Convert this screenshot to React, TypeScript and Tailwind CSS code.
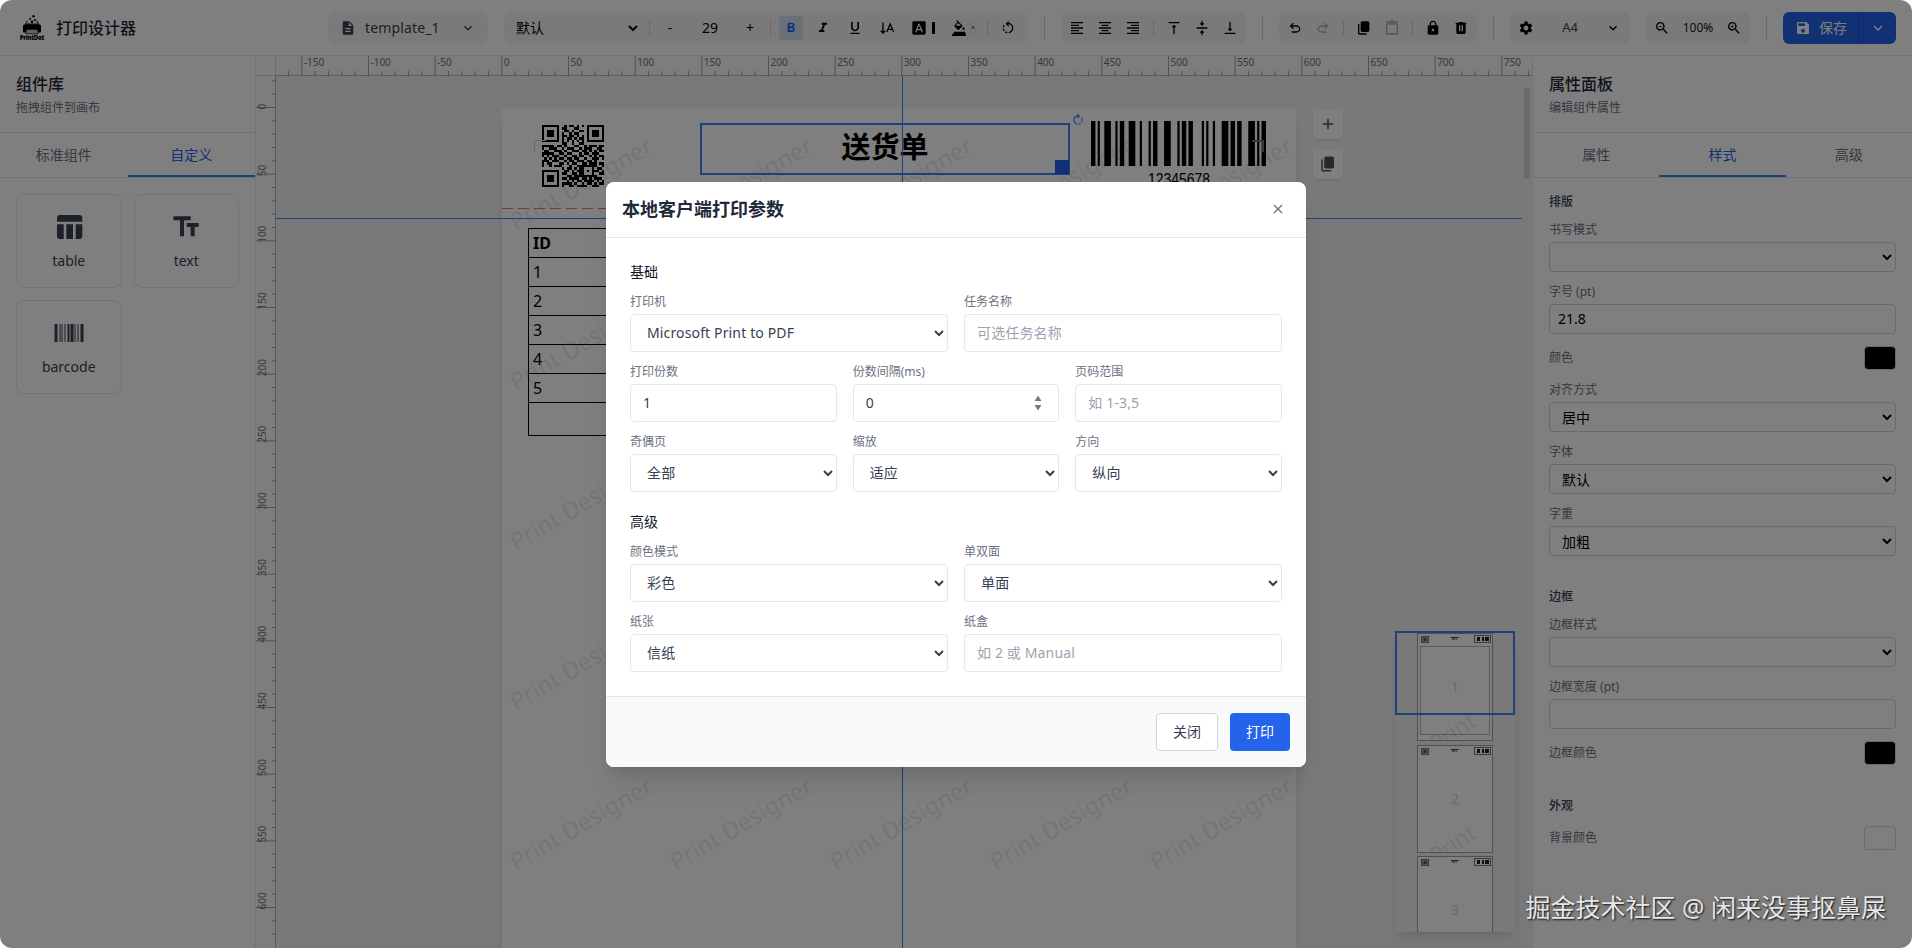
import type { ReactNode } from "react"
import {
    MdAdd,
    MdContentPaste,
    MdDescription,
    MdExpandMore,
    MdFontDownload,
    MdFormatAlignCenter,
    MdFormatAlignLeft,
    MdFormatAlignRight,
    MdFormatBold,
    MdFormatColorFill,
    MdFormatItalic,
    MdFormatUnderlined,
    MdLock,
    MdRotateLeft,
    MdRotateRight,
    MdSave,
    MdSettings,
    MdTableChart,
    MdTextFields,
    MdVerticalAlignBottom,
    MdVerticalAlignCenter,
    MdVerticalAlignTop,
    MdZoomIn,
    MdZoomOut,
} from "react-icons/md"

// 1pt on the rulers is 4/3 px
const PT = 4 / 3

const QR_ROWS = [
    "1111111001011010101111111",
    "1000001011000110001000001",
    "1011101001101001101011101",
    "1011101010010110001011101",
    "1011101011011010101011101",
    "1000001010110101101000001",
    "1111111010101010101111111",
    "0000000011001001100000000",
    "1111101101000110010111011",
    "1001110010111001011100110",
    "0110011101001110110101011",
    "1111100110110001011011100",
    "1010111001001101100101011",
    "0101010110110110010011101",
    "1110111001011011101101000",
    "1011000110101100110111011",
    "1001011100010011111111001",
    "0000000010110101100010110",
    "1111111001101011101011101",
    "1000001011001101100010011",
    "1011101000110111111111000",
    "1011101011011110110101110",
    "1011101000101011011110101",
    "1000001011110100101101011",
    "1111111010011011110011100",
]

// Code 128-C widths: start, 12, 34, 56, 78, checksum, stop
const BARCODE = "2112321122321311233311212411121331212331112"

// [x, width] of each bar in the barcode card icon
const CARD_BARS = [
    [0, 3],
    [5, 1],
    [7, 1],
    [10, 1],
    [13, 2],
    [16, 3],
    [20, 1],
    [23, 1],
    [26, 3],
]

function UndoIcon({ flip = false }: { flip?: boolean }) {
    return (
        <svg viewBox="0 0 24 24" className={flip ? "w-4 h-4 -scale-x-100" : "w-4 h-4"} fill="currentColor">
            <path d="M7 19v-2h7.1q1.575 0 2.738-1T18 13.5T16.838 11T14.1 10H7.8l2.6 2.6L9 14L4 9l5-5l1.4 1.4L7.8 8h6.3q2.425 0 4.163 1.575T20 13.5t-1.737 3.925T14.1 19z" />
        </svg>
    )
}

function CopyIcon({ className = "w-4 h-4" }: { className?: string }) {
    return (
        <svg viewBox="0 0 24 24" className={className} fill="currentColor">
            <path d="M9 18q-.825 0-1.412-.587T7 16V4q0-.825.588-1.412T9 2h9q.825 0 1.413.588T20 4v12q0 .825-.587 1.413T18 18zm-4 4q-.825 0-1.412-.587T3 20V6h2v14h11v2z" />
        </svg>
    )
}

function TrashIcon() {
    return (
        <svg viewBox="0 0 24 24" className="w-4 h-4" fill="currentColor">
            <path d="M7 21q-.825 0-1.412-.587T5 19V6H4V4h5V3h6v1h5v2h-1v13q0 .825-.587 1.413T17 21zm2-4h2V8H9zm4 0h2V8h-2z" />
        </svg>
    )
}

function VerticalTextIcon() {
    return (
        <svg viewBox="0 0 16 16" className="w-4 h-4" fill="none" stroke="currentColor" strokeWidth="1.300">
            <path d="M4 2.500v10.500M1.800 10.800 4 13l2.200-2.200" />
            <path d="M7.800 12 11.200 4l3.400 8M9 9.400h4.400" />
        </svg>
    )
}

function Logo() {
    return (
        <svg viewBox="0 0 32 32" className="w-8 h-8 shrink-0">
            <circle cx="17.5" cy="4.2" r="1.2" />
            <circle cx="14.2" cy="6.8" r="1" />
            <circle cx="18.8" cy="8" r="1" />
            <circle cx="16" cy="9.8" r="1.3" />
            <path d="M11.5 8.5 9.5 12h13l-2-3.5" fill="none" stroke="#000" strokeWidth="0.9" />
            <path d="M9 12.3h14q2 0 2 2v5q0 1.2-1.2 1.2H22v-3H10v3H8.2q-1.2 0-1.2-1.2v-5q0-2 2-2z" />
            <path d="M10.5 17.500h11l.8 4.300H9.700z" fill="#c4c4c4" stroke="#000" strokeWidth="0.7" />
            <text x="16" y="27.600" fontSize="6" fontWeight="800" textAnchor="middle" textLength="24.500" fontFamily="Open Sans, sans-serif">
                PrintDot
            </text>
        </svg>
    )
}

function IconButton({ children, active, disabled }: { children: ReactNode; active?: boolean; disabled?: boolean }) {
    const tone = active ? "bg-[#d5e0f0] text-[#2563eb]" : disabled ? "text-black opacity-30" : "text-black"
    return <button className={`w-6 h-6 shrink-0 rounded flex items-center justify-center ${tone}`}>{children}</button>
}

function Group({ children, className = "px-1 gap-1" }: { children: ReactNode; className?: string }) {
    return <div className={`h-8 bg-[#f5f5f6] rounded-lg flex items-center shrink-0 ${className}`}>{children}</div>
}

function InnerDivider({ className = "" }: { className?: string }) {
    return <div className={`w-px h-4 bg-gray-300 shrink-0 ${className}`} />
}

function OuterDivider() {
    return <div className="w-px h-6 bg-gray-300 shrink-0" />
}

function Toolbar() {
    return (
        <header className="h-14 shrink-0 bg-white border-b border-gray-200 px-4 flex items-center justify-between">
            <div className="flex items-center gap-2">
                <Logo />
                <h1 className="text-base font-medium text-gray-800">打印设计器</h1>
            </div>

            <div className="flex items-center gap-4 text-sm">
                <Group className="w-40 px-3">
                    <MdDescription className="w-4 h-4 text-gray-700 shrink-0" />
                    <span className="ml-[9px] text-gray-700 flex-1 tracking-[0.01em]">template_1</span>
                    <MdExpandMore className="w-4 h-4 text-gray-700" />
                </Group>

                <Group className="px-2 gap-2">
                    <select className="w-[129px] h-6 text-sm text-black">
                        <option>默认</option>
                    </select>
                    <InnerDivider />
                    <button className="w-6 text-center">-</button>
                    <span className="w-10 text-center">29</span>
                    <button className="w-6 text-center">+</button>
                    <InnerDivider />
                    <IconButton active>
                        <MdFormatBold className="w-4 h-4" />
                    </IconButton>
                    <IconButton>
                        <MdFormatItalic className="w-4 h-4" />
                    </IconButton>
                    <IconButton>
                        <MdFormatUnderlined className="w-4 h-4" />
                    </IconButton>
                    <IconButton>
                        <VerticalTextIcon />
                    </IconButton>
                    <div className="w-8 flex items-center">
                        <IconButton>
                            <MdFontDownload className="w-4 h-4" />
                        </IconButton>
                        <span className="w-[3px] h-3 bg-black ml-px" />
                    </div>
                    <div className="w-8 flex items-center">
                        <IconButton>
                            <span className="flex flex-col items-center">
                                <MdFormatColorFill className="w-[15px] h-[14px]" />
                                <span className="w-3.5 h-0.5 bg-black" />
                            </span>
                        </IconButton>
                        <span className="w-1 h-3 border border-gray-300 bg-white flex items-center">
                            <span className="w-full h-[3px] bg-red-400" />
                        </span>
                    </div>
                    <InnerDivider />
                    <IconButton>
                        <MdRotateLeft className="w-4 h-4" />
                    </IconButton>
                </Group>

                <OuterDivider />

                <Group>
                    <IconButton>
                        <MdFormatAlignLeft className="w-4 h-4" />
                    </IconButton>
                    <IconButton>
                        <MdFormatAlignCenter className="w-4 h-4" />
                    </IconButton>
                    <IconButton>
                        <MdFormatAlignRight className="w-4 h-4" />
                    </IconButton>
                    <InnerDivider className="mx-1" />
                    <IconButton>
                        <MdVerticalAlignTop className="w-4 h-4" />
                    </IconButton>
                    <IconButton>
                        <MdVerticalAlignCenter className="w-4 h-4" />
                    </IconButton>
                    <IconButton>
                        <MdVerticalAlignBottom className="w-4 h-4" />
                    </IconButton>
                </Group>

                <OuterDivider />

                <Group>
                    <IconButton>
                        <UndoIcon />
                    </IconButton>
                    <IconButton disabled>
                        <UndoIcon flip />
                    </IconButton>
                    <InnerDivider className="mx-1" />
                    <IconButton>
                        <CopyIcon />
                    </IconButton>
                    <IconButton disabled>
                        <MdContentPaste className="w-4 h-4" />
                    </IconButton>
                    <InnerDivider className="mx-1" />
                    <IconButton>
                        <MdLock className="w-4 h-4" />
                    </IconButton>
                    <IconButton>
                        <TrashIcon />
                    </IconButton>
                </Group>

                <OuterDivider />

                <Group className="w-[120px] px-1">
                    <IconButton>
                        <MdSettings className="w-4 h-4" />
                    </IconButton>
                    <span className="w-16 text-center text-[13px] text-gray-700">A4</span>
                    <MdExpandMore className="w-4 h-4 ml-[3px] text-black" />
                </Group>

                <Group>
                    <IconButton>
                        <MdZoomOut className="w-4 h-4" />
                    </IconButton>
                    <span className="w-10 text-center text-xs text-gray-900">100%</span>
                    <IconButton>
                        <MdZoomIn className="w-4 h-4" />
                    </IconButton>
                </Group>

                <OuterDivider />

                <div className="h-8 w-[113px] rounded-md bg-[#2563eb] text-white flex overflow-hidden">
                    <button className="w-[76px] flex items-center gap-2 pl-3 border-r border-[#1d4ed8]">
                        <MdSave className="w-4 h-4" />
                        <span className="text-sm">保存</span>
                    </button>
                    <button className="flex-1 flex items-center justify-center">
                        <MdExpandMore className="w-[18px] h-[18px]" />
                    </button>
                </div>
            </div>
        </header>
    )
}

function PanelHeader({ title, hint }: { title: string; hint: string }) {
    return (
        <div className="p-4 border-b border-gray-200">
            <h2 className="text-base font-medium text-gray-800">{title}</h2>
            <p className="text-xs text-gray-500 mt-1">{hint}</p>
        </div>
    )
}

function Tabs({ items, active }: { items: string[]; active: string }) {
    return (
        <div className="flex border-b border-gray-200">
            {items.map((item) => (
                <button
                    key={item}
                    className={
                        item === active
                            ? "flex-1 pt-3 pb-2.5 text-sm text-[#2563eb] border-b-2 border-[#3b82f6]"
                            : "flex-1 pt-3 pb-2.5 text-sm text-gray-500 border-b-2 border-transparent"
                    }
                >
                    {item}
                </button>
            ))}
        </div>
    )
}

function ComponentCard({ icon, label }: { icon: ReactNode; label: string }) {
    return (
        <div className="h-[94px] border border-gray-200 rounded-lg flex flex-col items-center justify-center gap-2 text-gray-700">
            <div className="h-8 flex items-center">{icon}</div>
            <span className="text-sm">{label}</span>
        </div>
    )
}

function LibraryPanel() {
    return (
        <aside className="w-64 shrink-0 bg-white border-r border-gray-200">
            <PanelHeader title="组件库" hint="拖拽组件到画布" />
            <Tabs items={["标准组件", "自定义"]} active="自定义" />
            <div className="p-4 grid grid-cols-2 gap-3">
                <ComponentCard icon={<MdTableChart className="w-8 h-8" />} label="table" />
                <ComponentCard icon={<MdTextFields className="w-8 h-8" />} label="text" />
                <ComponentCard
                    icon={
                        <svg viewBox="0 0 29 18" className="w-[30px] h-[18px]" fill="currentColor">
                            {CARD_BARS.map(([x, w]) => (
                                <rect key={x} x={x} width={w} height="18" />
                            ))}
                        </svg>
                    }
                    label="barcode"
                />
            </div>
        </aside>
    )
}

function HorizontalRuler() {
    const ticks = Array.from({ length: 95 }, (_, i) => (i - 17) * 10)
    return (
        <svg className="h-5 w-full block bg-gray-50" fontSize="10" fill="#6b7280">
            <line x1="0" x2="1260" y1="19.5" y2="19.5" stroke="#b4b8bf" />
            {ticks.map((v) => {
                const x = 225.8 + v * PT
                return v % 50 === 0 ? (
                    <g key={v}>
                        <line x1={x} x2={x} y1="0" y2="20" stroke="#9ca3af" />
                        <text x={x + 2} y="10">
                            {v}
                        </text>
                    </g>
                ) : (
                    <line key={v} x1={x} x2={x} y1="15" y2="20" stroke="#9ca3af" />
                )
            })}
        </svg>
    )
}

function VerticalRuler() {
    const ticks = Array.from({ length: 65 }, (_, i) => (i - 2) * 10)
    return (
        <svg className="w-5 h-full block bg-gray-50" fontSize="10" fill="#6b7280">
            <line x1="19.5" x2="19.5" y1="0" y2="900" stroke="#b4b8bf" />
            {ticks.map((v) => {
                const y = 31.5 + v * PT
                return v % 50 === 0 ? (
                    <g key={v}>
                        <line x1="0" x2="20" y1={y} y2={y} stroke="#9ca3af" />
                        <text transform={`translate(10 ${y + 2}) rotate(-90)`}>{v}</text>
                    </g>
                ) : (
                    <line key={v} x1="16" x2="20" y1={y} y2={y} stroke="#9ca3af" />
                )
            })}
        </svg>
    )
}

function QrCode() {
    return (
        <svg viewBox="0 0 25 25" className="w-full h-full" shapeRendering="crispEdges">
            {QR_ROWS.flatMap((row, y) =>
                row.split("").map((c, x) => (c === "1" ? <rect key={`${x}-${y}`} x={x} y={y} width="1" height="1" /> : null))
            )}
        </svg>
    )
}

function Barcode() {
    let x = 0
    const bars: ReactNode[] = []
    BARCODE.split("").forEach((c, i) => {
        const w = Number(c)
        if (i % 2 === 0) bars.push(<rect key={i} x={x} y="0" width={w} height="45" />)
        x += w
    })
    return (
        <div className="flex flex-col items-center">
            <svg viewBox="0 0 79 45" preserveAspectRatio="none" className="w-[175px] h-[45px]">
                {bars}
            </svg>
            <svg viewBox="0 0 62 20" className="w-[62px] h-5 mt-1">
                <text x="0" y="15" fontSize="17" textLength="62" lengthAdjust="spacingAndGlyphs" fontFamily="Liberation Sans, sans-serif">
                    12345678
                </text>
            </svg>
        </div>
    )
}

function Watermark() {
    const cells = [0, 1, 2, 3, 4].flatMap((col) => [0, 1, 2, 3, 4].map((row) => ({ col, row })))
    return (
        <svg className="absolute inset-0 w-full h-full" fontSize="23.5" fill="rgba(0,0,0,0.09)">
            {cells.map(({ col, row }) => (
                <text key={`${col}-${row}`} transform={`translate(${14 + col * 160} ${123 + row * 160}) rotate(-30)`} textLength="160">
                    Print Designer
                </text>
            ))}
        </svg>
    )
}

function DataTable() {
    return (
        <table className="w-[740px] border-collapse text-base leading-5 text-black">
            <tbody>
                {["ID", "1", "2", "3", "4", "5", ""].map((cell, i) => (
                    <tr key={i} className={i === 6 ? "h-[33px]" : "h-[29px]"}>
                        <td className={i === 0 ? "border border-black px-1 py-0 font-bold" : "border border-black px-1 py-0"}>{cell}</td>
                    </tr>
                ))}
            </tbody>
        </table>
    )
}

function Paper() {
    return (
        <div className="absolute left-[226px] top-8 w-[794px] h-[1123px] bg-white shadow-lg">
            <div className="absolute left-[40px] top-[17px] w-[62px] h-[62px]">
                <QrCode />
            </div>
            <div className="absolute left-[589px] top-[13px]">
                <Barcode />
            </div>
            <svg className="absolute left-0 top-[100px] w-full h-px">
                <line x1="0" x2="794" y1="0.5" y2="0.5" stroke="#f87171" strokeWidth="1" strokeDasharray="11 5" />
            </svg>
            <div className="absolute left-[26px] top-[120px]">
                <DataTable />
            </div>
            {/* margin corner marks */}
            <div className="absolute left-[32px] top-[32px] w-3 h-3 border-l border-t border-gray-300" />
            <div className="absolute left-[750px] top-[32px] w-3 h-3 border-r-2 border-t-2 border-gray-500" />
            <Watermark />
            <div className="absolute left-[198px] top-[15px] w-[370px] h-[52px] border-2 border-[#3b82f6] flex justify-center">
                <span className="text-[29px] leading-[44px] font-bold text-black">送货单</span>
                <span className="absolute -right-px -bottom-px w-3.5 h-3.5 bg-[#2563eb]" />
                <MdRotateRight className="absolute -right-[17px] -top-[12px] w-3.5 h-3.5 text-[#3b82f6]" />
            </div>
            <div className="absolute left-[811px] top-px flex flex-col gap-2.5 text-gray-600">
                <button className="w-[30px] h-[30px] rounded bg-white shadow flex items-center justify-center">
                    <MdAdd className="w-[18px] h-[18px]" />
                </button>
                <button className="w-[30px] h-[30px] rounded bg-white shadow flex items-center justify-center">
                    <CopyIcon className="w-[18px] h-[18px]" />
                </button>
            </div>
        </div>
    )
}

function MiniPage({ number, table }: { number: number; table?: boolean }) {
    return (
        <div className="relative w-[76px] h-[108px] shrink-0 bg-white border border-gray-400 overflow-hidden">
            <svg viewBox="0 0 74 106" className="w-full h-full">
                <rect x="3.5" y="2.500" width="7" height="6" fill="#aaa" stroke="#777" />
                <rect x="5.500" y="4" width="3" height="3" fill="#555" />
                <path d="M33 3.500h8M34 5h5" fill="none" stroke="#333" strokeDasharray="3 .5" />
                <rect x="56.500" y="1.500" width="16" height="7" fill="none" stroke="#777" />
                <path d="M59 3h3v4h-3zM64 3h2v4h-2zM67 3h4v4h-4z" fill="#222" />
                {table && <rect x="2.500" y="12.500" width="69" height="88" fill="none" stroke="#b4b8bf" />}
                <text transform="translate(18 118) rotate(-33)" fontSize="22" fill="rgba(0,0,0,0.1)">
                    Print
                </text>
            </svg>
            <span className="absolute inset-0 flex items-center justify-center text-sm text-gray-300">{number}</span>
        </div>
    )
}

function MiniMap() {
    return (
        <div className="absolute left-[1119px] top-[555px] w-[120px] h-[301px] bg-[#f3f3f4] shadow-lg">
            <div className="h-full pt-[2px] flex flex-col items-center gap-[3.5px] overflow-hidden">
                <MiniPage number={1} table />
                <MiniPage number={2} />
                <MiniPage number={3} />
            </div>
            <div className="absolute left-0 top-0 w-[120px] h-[84px] border-2 border-[#3b82f6]" />
        </div>
    )
}

function Workspace() {
    return (
        <main className="flex-1 min-w-0 flex flex-col bg-[#f3f3f4]">
            <div className="flex h-5 shrink-0">
                <div className="w-5 shrink-0 bg-gray-50 border-r border-b border-gray-300" />
                <HorizontalRuler />
            </div>
            <div className="flex flex-1 min-h-0">
                <div className="w-5 shrink-0">
                    <VerticalRuler />
                </div>
                <div className="relative flex-1 overflow-hidden">
                    <Paper />
                    <div className="absolute top-0 bottom-0 left-[626px] w-px bg-[#3b82f6]" />
                    <div className="absolute left-0 right-[10px] top-[142px] h-px bg-[#3b82f6]" />
                    <MiniMap />
                    <div className="absolute right-[2px] top-3 w-1.5 h-[91px] rounded-full bg-gray-300" />
                </div>
            </div>
        </main>
    )
}

function PropSelect({ label, value = "" }: { label: string; value?: string }) {
    return (
        <label className="block mt-3">
            <span className="block text-xs text-gray-500">{label}</span>
            <select className="block mt-1 w-full h-[30px] px-2 text-sm text-black border border-gray-300 rounded">
                <option>{value}</option>
            </select>
        </label>
    )
}

function PropInput({ label, value = "" }: { label: string; value?: string }) {
    return (
        <label className="block mt-3">
            <span className="block text-xs text-gray-500">{label}</span>
            <input readOnly value={value} className="block mt-1 w-full h-[30px] px-2 pb-px text-sm text-black border border-gray-300 rounded" />
        </label>
    )
}

function ColorRow({ label, empty }: { label: string; empty?: boolean }) {
    return (
        <div className="mt-3 h-6 flex items-center justify-between">
            <span className="text-xs text-gray-500">{label}</span>
            <span className={empty ? "w-8 h-6 rounded border border-gray-300" : "w-8 h-6 rounded border border-gray-300 bg-black"} />
        </div>
    )
}

function PropertyPanel() {
    return (
        <aside className="w-[380px] shrink-0 bg-white border-l border-gray-200">
            <PanelHeader title="属性面板" hint="编辑组件属性" />
            <Tabs items={["属性", "样式", "高级"]} active="样式" />
            <div className="p-4 flex flex-col gap-[33px]">
                <section>
                    <h3 className="text-xs font-medium text-gray-700">排版</h3>
                    <PropSelect label="书写模式" />
                    <PropInput label="字号 (pt)" value="21.8" />
                    <ColorRow label="颜色" />
                    <PropSelect label="对齐方式" value="居中" />
                    <PropSelect label="字体" value="默认" />
                    <PropSelect label="字重" value="加粗" />
                </section>
                <section>
                    <h3 className="text-xs font-medium text-gray-700">边框</h3>
                    <PropSelect label="边框样式" />
                    <PropInput label="边框宽度 (pt)" />
                    <ColorRow label="边框颜色" />
                </section>
                <section>
                    <h3 className="text-xs font-medium text-gray-700">外观</h3>
                    <ColorRow label="背景颜色" empty />
                </section>
            </div>
        </aside>
    )
}

function Field({ label, children }: { label: string; children: ReactNode }) {
    return (
        <label className="block">
            <span className="block mb-1 text-xs text-gray-500">{label}</span>
            {children}
        </label>
    )
}

function SelectField({ label, value }: { label: string; value: string }) {
    return (
        <Field label={label}>
            <select className="block w-full h-[38px] px-3 text-sm tracking-[0.01em] text-gray-700 border border-gray-200 rounded">
                <option>{value}</option>
            </select>
        </Field>
    )
}

function InputField({ label, value, placeholder, spinner }: { label: string; value?: string; placeholder?: string; spinner?: boolean }) {
    return (
        <Field label={label}>
            <span className="relative block">
                <input
                    readOnly
                    value={value ?? ""}
                    placeholder={placeholder}
                    className="block w-full h-[38px] px-3 text-sm tracking-[0.01em] text-gray-700 border border-gray-200 rounded placeholder:text-[#9ca3af]"
                />
                {spinner && (
                    <svg viewBox="0 0 8 16" className="absolute right-[17px] top-[11px] w-2 h-4" fill="#7a7a7a">
                        <path d="M4 0.500 7.500 6h-7zM4 15.500 7.500 10h-7z" />
                    </svg>
                )}
            </span>
        </Field>
    )
}

function PrintDialog() {
    return (
        <div className="w-[700px] bg-white rounded-lg shadow-xl overflow-hidden">
            <div className="h-14 px-4 border-b border-gray-200 flex items-center justify-between">
                <h2 className="text-lg font-semibold text-[#1f2937]">本地客户端打印参数</h2>
                <button className="w-6 h-6 flex items-center justify-center text-gray-500">
                    <svg viewBox="0 0 10 10" className="w-2.5 h-2.5" fill="none" stroke="currentColor" strokeWidth="1.3">
                        <path d="M1 1l8 8M9 1L1 9" />
                    </svg>
                </button>
            </div>

            <div className="p-6 flex flex-col gap-5">
                <section className="flex flex-col gap-3">
                    <h3 className="text-sm text-[#111827]">基础</h3>
                    <div className="grid grid-cols-2 gap-4">
                        <SelectField label="打印机" value="Microsoft Print to PDF" />
                        <InputField label="任务名称" placeholder="可选任务名称" />
                    </div>
                    <div className="grid grid-cols-3 gap-x-4 gap-y-3">
                        <InputField label="打印份数" value="1" />
                        <InputField label="份数间隔(ms)" value="0" spinner />
                        <InputField label="页码范围" placeholder="如 1-3,5" />
                        <SelectField label="奇偶页" value="全部" />
                        <SelectField label="缩放" value="适应" />
                        <SelectField label="方向" value="纵向" />
                    </div>
                </section>
                <section className="flex flex-col gap-3">
                    <h3 className="text-sm text-[#111827]">高级</h3>
                    <div className="grid grid-cols-2 gap-x-4 gap-y-3">
                        <SelectField label="颜色模式" value="彩色" />
                        <SelectField label="单双面" value="单面" />
                        <SelectField label="纸张" value="信纸" />
                        <InputField label="纸盒" placeholder="如 2 或 Manual" />
                    </div>
                </section>
            </div>

            <div className="p-4 bg-gray-50 border-t border-gray-200 flex justify-end gap-3 text-sm">
                <button className="h-[38px] px-4 bg-white border border-gray-300 rounded text-gray-700">关闭</button>
                <button className="h-[38px] px-4 bg-[#2563eb] rounded text-white">打印</button>
            </div>
        </div>
    )
}

export default function App() {
    return (
        <div className="bg-white font-['Noto_Sans','Noto_Sans_CJK_SC',sans-serif]">
            <div className="relative w-[1912px] h-[948px] rounded-xl overflow-hidden flex flex-col bg-white">
                <Toolbar />
                <div className="flex flex-1 min-h-0">
                    <LibraryPanel />
                    <Workspace />
                    <PropertyPanel />
                </div>
                <div className="absolute inset-0 bg-black/50 flex items-center justify-center">
                    <PrintDialog />
                </div>
                <p className="absolute right-[26px] bottom-[23px] text-[25px] leading-9 text-gray-200 whitespace-nowrap [text-shadow:1px_1px_2px_rgba(0,0,0,0.9)]">
                    掘金技术社区 @ 闲来没事抠鼻屎
                </p>
            </div>
        </div>
    )
}
